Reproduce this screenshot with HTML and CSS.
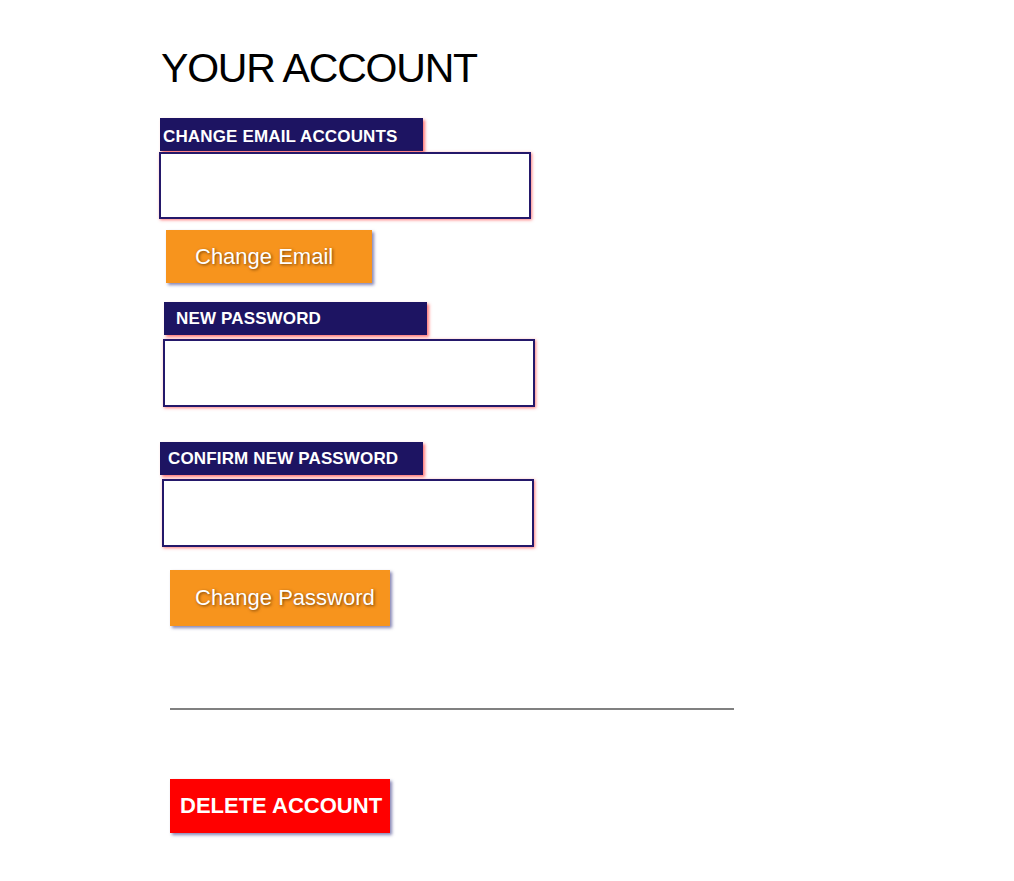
FILE: index.html
```html
<!DOCTYPE html>
<html>
<head>
<meta charset="utf-8">
<title>Your Account</title>
<link rel="stylesheet" href="styles.css">
</head>
<body>
<main class="page">
  <h1 class="title">YOUR ACCOUNT</h1>

  <div class="label label-email">CHANGE EMAIL ACCOUNTS</div>
  <input class="field field-email" type="text">
  <button class="btn-orange btn-email">Change Email</button>

  <div class="label label-new">NEW PASSWORD</div>
  <input class="field field-new" type="password">

  <div class="label label-confirm">CONFIRM NEW PASSWORD</div>
  <input class="field field-confirm" type="password">
  <button class="btn-orange btn-pass">Change Password</button>

  <hr class="divider">

  <button class="btn-delete">DELETE ACCOUNT</button>
</main>
</body>
</html>
```

FILE: styles.css
```css
html, body {
  margin: 0;
  padding: 0;
  background: #ffffff;
}

.page {
  display: flex;
  flex-direction: column;
  align-items: flex-start;
  padding: 46px 0 40px 160px;
  font-family: "Liberation Sans", Arial, Helvetica, sans-serif;
}

.title {
  margin: 0;
  font-size: 41px;
  font-weight: normal;
  line-height: 44px;
  color: #000;
  letter-spacing: -1.2px;
  padding-left: 1px;
}

.label {
  box-sizing: border-box;
  width: 263px;
  height: 33px;
  background: #1d1462;
  color: #fff;
  font-weight: bold;
  font-size: 17px;
  line-height: 30px;
  padding-top: 3px;
  letter-spacing: 0.15px;
  white-space: nowrap;
  box-shadow: 2px 2px 3px rgba(255, 60, 60, 0.7);
}

.label-email { margin-top: 28px; padding-left: 3px; padding-top: 4px; line-height: 29px; }
.label-new { margin-top: 19px; margin-left: 4px; padding-left: 12px; padding-top: 0; line-height: 33px; }
.label-confirm { margin-top: 35px; padding-left: 8px; padding-top: 0; line-height: 33px; }

.field {
  box-sizing: border-box;
  display: block;
  width: 372px;
  height: 67px;
  border: 2px solid #24186a;
  background: #fff;
  padding: 0 8px;
  margin: 0;
  outline: none;
  box-shadow: 1px 1px 3px rgba(255, 70, 70, 0.7);
}

.field-email { margin-top: 1px; margin-left: -1px; }
.field-new { margin-top: 4px; margin-left: 3px; height: 68px; }
.field-confirm { margin-top: 4px; margin-left: 2px; height: 68px; }

.btn-orange {
  box-sizing: border-box;
  border: none;
  background: #f7941d;
  color: #fff;
  font-family: "Liberation Sans", Arial, Helvetica, sans-serif;
  font-size: 22px;
  text-align: left;
  text-shadow: 1px 1px 3px rgba(80, 40, 0, 0.75);
  box-shadow: 2px 2px 3px rgba(50, 50, 130, 0.6);
  padding: 0;
  cursor: pointer;
}

.btn-email {
  margin-top: 11px;
  margin-left: 6px;
  width: 206px;
  height: 53px;
  padding-left: 29px;
}

.btn-pass {
  margin-top: 23px;
  margin-left: 10px;
  width: 220px;
  height: 56px;
  padding-left: 25px;
}

.divider {
  align-self: flex-start;
  width: 564px;
  margin: 82px 0 0 10px;
  border: none;
  border-top: 2px solid #808080;
  height: 0;
}

.btn-delete {
  box-sizing: border-box;
  margin-top: 69px;
  margin-left: 10px;
  width: 220px;
  height: 54px;
  border: none;
  background: #ff0000;
  color: #fff;
  font-family: "Liberation Sans", Arial, Helvetica, sans-serif;
  font-weight: bold;
  font-size: 22px;
  padding: 0 0 0 10px;
  text-align: left;
  white-space: nowrap;
  box-shadow: 2px 2px 3px rgba(50, 50, 130, 0.6);
  cursor: pointer;
}
```
